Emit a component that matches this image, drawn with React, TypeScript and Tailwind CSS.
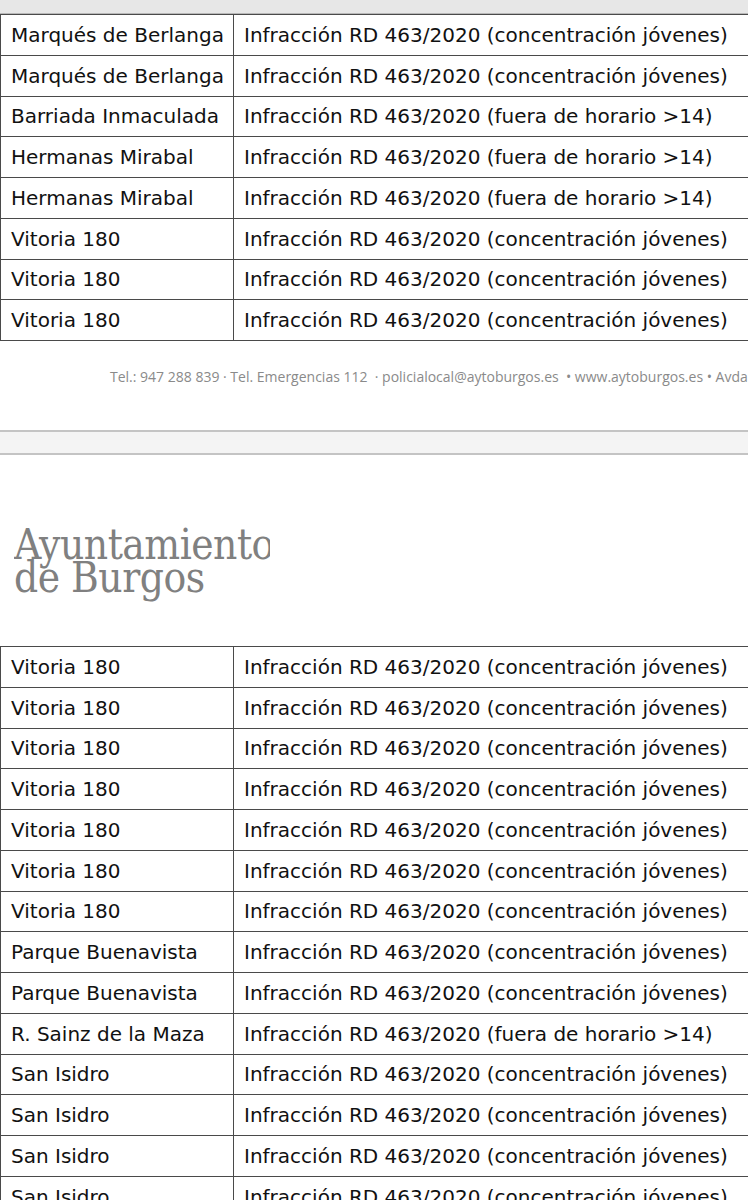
import React from 'react';

const first = [
  ['Marqués de Berlanga', 'concentración jóvenes'],
  ['Marqués de Berlanga', 'concentración jóvenes'],
  ['Barriada Inmaculada', 'fuera de horario >14'],
  ['Hermanas Mirabal', 'fuera de horario >14'],
  ['Hermanas Mirabal', 'fuera de horario >14'],
  ['Vitoria 180', 'concentración jóvenes'],
  ['Vitoria 180', 'concentración jóvenes'],
  ['Vitoria 180', 'concentración jóvenes'],
];

const second = [
  ['Vitoria 180', 'concentración jóvenes'],
  ['Vitoria 180', 'concentración jóvenes'],
  ['Vitoria 180', 'concentración jóvenes'],
  ['Vitoria 180', 'concentración jóvenes'],
  ['Vitoria 180', 'concentración jóvenes'],
  ['Vitoria 180', 'concentración jóvenes'],
  ['Vitoria 180', 'concentración jóvenes'],
  ['Parque Buenavista', 'concentración jóvenes'],
  ['Parque Buenavista', 'concentración jóvenes'],
  ['R. Sainz de la Maza', 'fuera de horario >14'],
  ['San Isidro', 'concentración jóvenes'],
  ['San Isidro', 'concentración jóvenes'],
  ['San Isidro', 'concentración jóvenes'],
  ['San Isidro', 'concentración jóvenes'],
];

const Table = ({ rows }: { rows: string[][] }) => (
  <div className="w-[800px] border-t border-l border-[#4a4a4a]">
    {rows.map(([place, reason], i) => (
      <div key={i} className="flex h-[40.75px] border-b border-[#4a4a4a] text-[20px] leading-none text-[#111]">
        <div className="w-[233px] shrink-0 border-r border-[#4a4a4a] pl-[10px] flex items-center whitespace-nowrap">
          {place}
        </div>
        <div className="flex-1 pl-[10px] flex items-center whitespace-nowrap">
          Infracción RD 463/2020 ({reason})
        </div>
      </div>
    ))}
  </div>
);

export default function App() {
  return (
    <div className="w-[748px] h-[1200px] overflow-hidden bg-white font-['DejaVu_Sans',sans-serif]">
      <div className="h-[14px] bg-[#e7e7e7] border-b border-[#b8b8b8]" />
      <Table rows={first} />

      <div className="mt-[26px] pl-[110px] whitespace-nowrap font-['Open_Sans',sans-serif] text-[14px] text-[#8a8a8a] leading-[19px]">
        Tel.: 947 288 839 · Tel. Emergencias 112&nbsp; · policialocal@aytoburgos.es&nbsp; • www.aytoburgos.es • Avda. Cantabria 26
      </div>

      <div className="mt-[44px] h-[25px] bg-[#f4f4f4] border-y-2 border-[#c4c4c4]" />

      <div className="mt-[73px] ml-[14px] w-[256px] overflow-x-clip whitespace-nowrap font-['DejaVu_Serif_Condensed','DejaVu_Serif',serif] font-stretch-condensed text-[#808080] text-[42px] leading-[33px] tracking-[-0.5px]">
        <div>Ayuntamiento</div>
        <div>de Burgos</div>
      </div>

      <div className="mt-[52px]">
        <Table rows={second} />
      </div>
    </div>
  );
}
